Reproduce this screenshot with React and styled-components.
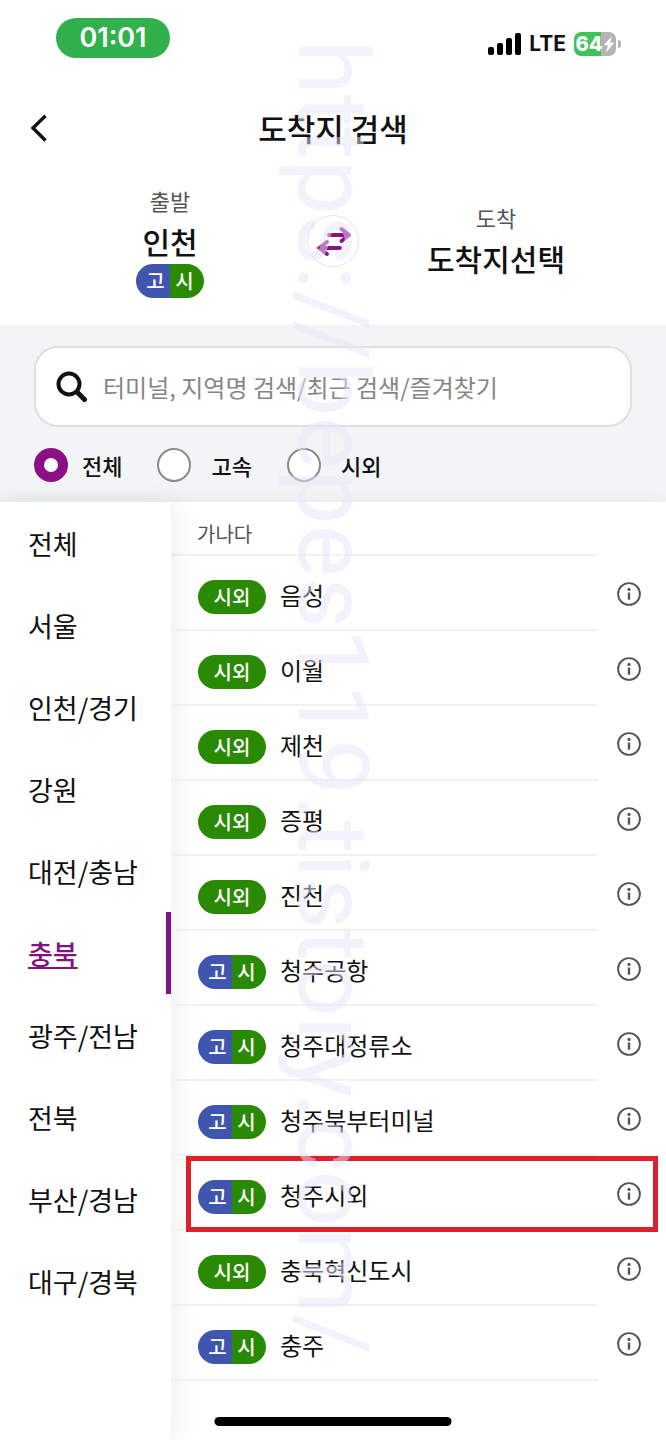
import React, { useState } from "react";
import styled, { createGlobalStyle } from "styled-components";

const regions = [
  "전체",
  "서울",
  "인천/경기",
  "강원",
  "대전/충남",
  "충북",
  "광주/전남",
  "전북",
  "부산/경남",
  "대구/경북",
];

const terminals = [
  { name: "음성" },
  { name: "이월" },
  { name: "제천" },
  { name: "증평" },
  { name: "진천" },
  { name: "청주공항", express: true },
  { name: "청주대정류소", express: true },
  { name: "청주북부터미널", express: true },
  { name: "청주시외", express: true, marked: true },
  { name: "충북혁신도시" },
  { name: "충주", express: true },
];

const busTypes = ["전체", "고속", "시외"];

const SignalIcon = () => (
  <svg width="33" height="22" viewBox="0 0 33 22" aria-hidden="true">
    <rect x="0" y="14" width="6" height="8" rx="2" />
    <rect x="9" y="10" width="6" height="12" rx="2" />
    <rect x="18" y="5" width="6" height="17" rx="2" />
    <rect x="27" y="0" width="6" height="22" rx="2" />
  </svg>
);

const BoltIcon = () => (
  <svg width="12" height="18" viewBox="0 0 12 18" aria-hidden="true">
    <path d="M9 1 0.500 10.200h4.500L3 17.500 11.500 7.600H7z" fill="#fff" />
  </svg>
);

const BackIcon = () => (
  <svg width="18" height="28" viewBox="0 0 18 28" aria-hidden="true">
    <path d="M14.500 1.800 2 14l12.500 12.500" fill="none" stroke="#111" strokeWidth="3.400" />
  </svg>
);

const SwapIcon = () => (
  <svg width="36" height="30" viewBox="0 0 36 30" aria-hidden="true">
    <g fill="none" stroke="#8b1085" strokeWidth="3.800" strokeLinecap="round">
      <path d="M14 9h19M26.500 3l7.500 6-7.500 6" />
      <path d="M25 22H5M12 16l-7.500 6 7.500 6" />
    </g>
  </svg>
);

const SearchIcon = () => (
  <svg width="32" height="32" viewBox="0 0 32 32" aria-hidden="true">
    <g fill="none" stroke="#111" strokeLinecap="round">
      <circle cx="13" cy="13" r="10.500" strokeWidth="4" />
      <path d="M21.500 21.500l7 7" strokeWidth="5" />
    </g>
  </svg>
);

const InfoIcon = () => (
  <svg width="24" height="24" viewBox="0 0 24 24" aria-hidden="true">
    <circle cx="12" cy="12" r="10.900" fill="none" stroke="#555" strokeWidth="1.900" />
    <circle cx="12" cy="7.400" r="1.600" fill="#555" />
    <path d="M12 10.500v7.200" stroke="#555" strokeWidth="2.400" />
  </svg>
);

const TypeBadge = ({ express }) =>
  express ? (
    <Badge $split>
      <BadgeText>고</BadgeText>
      <BadgeText>시</BadgeText>
    </Badge>
  ) : (
    <Badge>
      <BadgeText>시외</BadgeText>
    </Badge>
  );

const App = () => {
  const [region, setRegion] = useState("충북");
  const [busType, setBusType] = useState("전체");

  return (
    <Page>
      <GlobalStyle />
      <StatusBar>
        <Clock>01:01</Clock>
        <StatusIcons>
          <SignalIcon />
          <Network>LTE</Network>
          <Battery>
            <BatteryBody>
              64
              <BoltIcon />
            </BatteryBody>
            <BatteryTip />
          </Battery>
        </StatusIcons>
      </StatusBar>

      <Header>
        <BackButton type="button" aria-label="뒤로">
          <BackIcon />
        </BackButton>
        <Title>도착지 검색</Title>
      </Header>

      <Route>
        <Stop>
          <StopLabel>출발</StopLabel>
          <StopName>인천</StopName>
          <TypeBadge express />
        </Stop>
        <SwapButton type="button" aria-label="출발지와 도착지 바꾸기">
          <SwapIcon />
        </SwapButton>
        <Stop>
          <StopLabel>도착</StopLabel>
          <StopName>도착지선택</StopName>
        </Stop>
      </Route>

      <Filters>
        <SearchBox>
          <SearchIcon />
          <SearchInput
            type="text"
            aria-label="터미널 검색"
            placeholder="터미널, 지역명 검색/최근 검색/즐겨찾기"
          />
        </SearchBox>
        <RadioGroup>
          {busTypes.map((type) => (
            <RadioLabel key={type}>
              <Radio
                type="radio"
                name="busType"
                checked={busType === type}
                onChange={() => setBusType(type)}
              />
              {type}
            </RadioLabel>
          ))}
        </RadioGroup>
      </Filters>

      <Content>
        <Sidebar>
          {regions.map((name) => (
            <RegionButton
              key={name}
              type="button"
              $active={name === region}
              onClick={() => setRegion(name)}
            >
              {name}
            </RegionButton>
          ))}
        </Sidebar>
        <Results>
          <SortHeading>가나다</SortHeading>
          <List>
            {terminals.map(({ name, express, marked }) => (
              <Row key={name}>
                <RowMain href="#">
                  <TypeBadge express={express} />
                  {name}
                </RowMain>
                <InfoButton type="button" aria-label={`${name} 정보`}>
                  <InfoIcon />
                </InfoButton>
                {marked && <Marker />}
              </Row>
            ))}
          </List>
        </Results>
      </Content>

      <HomeIndicator />
      <Watermark>https://bepes119.tistory.com/</Watermark>
    </Page>
  );
};

const GlobalStyle = createGlobalStyle`
  * {
    box-sizing: border-box;
  }
  body {
    margin: 0;
    background: #fff;
    color: #111;
    font-family: "Noto Sans CJK KR", sans-serif;
  }
  button {
    border: 0;
    padding: 0;
    background: none;
    color: inherit;
    font-family: inherit;
    cursor: pointer;
  }
  svg {
    display: block;
    flex-shrink: 0;
  }
`;

const Page = styled.div`
  position: relative;
  display: flex;
  flex-direction: column;
  min-height: 100vh;
  overflow: hidden;
`;

const StatusBar = styled.div`
  display: flex;
  justify-content: space-between;
  align-items: flex-start;
  height: 88px;
  padding: 18px 45px 0 56px;
  font-family: Inter, sans-serif;
`;

const Clock = styled.div`
  width: 114px;
  border-radius: 20px;
  background: #31b14d;
  color: #fff;
  font-size: 27px;
  font-weight: 600;
  line-height: 40px;
  text-align: center;
`;

const StatusIcons = styled.div`
  display: flex;
  align-items: center;
  gap: 8px;
  padding-top: 14px;
`;

const Network = styled.span`
  font-size: 21px;
  font-weight: 700;
  line-height: 24px;
`;

const Battery = styled.div`
  display: flex;
  align-items: center;
  gap: 2px;
`;

const BatteryBody = styled.div`
  display: flex;
  align-items: center;
  justify-content: center;
  width: 42px;
  height: 24px;
  border-radius: 7px;
  background: linear-gradient(to right, #3fc45c 65%, #b4b4b4 65%);
  color: #fff;
  font-size: 20px;
  font-weight: 800;
  line-height: 24px;
`;

const BatteryTip = styled.div`
  width: 3px;
  height: 8px;
  border-radius: 0 3px 3px 0;
  background: #b4b4b4;
`;

const Header = styled.header`
  display: grid;
  grid-template-columns: 48px 1fr 48px;
  align-items: center;
  height: 80px;
  padding: 0 16px;
`;

const BackButton = styled.button`
  display: flex;
  align-items: center;
  justify-content: center;
  height: 48px;
`;

const Title = styled.h1`
  margin: 0;
  font-size: 31px;
  font-weight: 500;
  line-height: 44px;
  text-align: center;
`;

const Route = styled.section`
  display: grid;
  grid-template-columns: 1fr 52px 1fr;
  align-items: center;
  padding: 16px 33px 27px;
`;

const Stop = styled.div`
  display: flex;
  flex-direction: column;
  align-items: center;
`;

const StopLabel = styled.span`
  margin-bottom: 4px;
  color: #555;
  font-size: 22px;
  line-height: 32px;
`;

const StopName = styled.strong`
  margin-bottom: 2px;
  font-size: 30px;
  font-weight: 500;
  line-height: 42px;
`;

const SwapButton = styled.button`
  display: flex;
  align-items: center;
  justify-content: center;
  height: 52px;
  border: 1px solid #e4e4e4;
  border-radius: 50%;
`;

const Badge = styled.span`
  display: flex;
  flex-shrink: 0;
  width: 68px;
  height: 34px;
  padding: ${({ $split }) => ($split ? "0 5px" : "0")};
  border-radius: 17px;
  background: ${({ $split }) =>
    $split ? "linear-gradient(to right, #3f55ae 50%, #2a8a03 50%)" : "#2a8a03"};
`;

const BadgeText = styled.span`
  flex: 1;
  color: #fff;
  font-size: 20px;
  font-weight: 500;
  line-height: 34px;
  text-align: center;
`;

const Filters = styled.section`
  display: flex;
  flex-direction: column;
  gap: 21px;
  padding: 21px 34px 20px;
  background: #f3f4f6;
`;

const SearchBox = styled.div`
  display: flex;
  align-items: center;
  gap: 15px;
  height: 81px;
  padding: 0 20px;
  border: 2px solid #dfdfe1;
  border-radius: 24px;
  background: #fff;
`;

const SearchInput = styled.input`
  flex: 1;
  min-width: 0;
  padding: 0;
  border: 0;
  outline: 0;
  background: none;
  color: #111;
  font-family: inherit;
  font-size: 24px;
  line-height: 36px;
  &::placeholder {
    color: #868686;
    opacity: 1;
  }
`;

const RadioGroup = styled.div`
  display: flex;
  gap: 35px;
`;

const Radio = styled.input`
  appearance: none;
  width: 34px;
  height: 34px;
  margin: 0 20px 0 0;
  border: 2px solid #8a8a8a;
  border-radius: 50%;
  background: #fff;
  &:checked {
    margin-right: 14px;
    border: 10px solid #8b1085;
  }
`;

const RadioLabel = styled.label`
  display: flex;
  align-items: center;
  font-size: 22px;
  font-weight: 500;
  line-height: 32px;
`;

const Content = styled.main`
  position: relative;
  display: flex;
  flex: 1;
  background: #fff;
  box-shadow: 0 0 16px rgba(0, 0, 0, 0.06);
`;

const Sidebar = styled.nav`
  position: relative;
  display: flex;
  flex-direction: column;
  flex-shrink: 0;
  width: 171px;
  background: #fff;
  box-shadow: 4px 0 24px rgba(0, 0, 0, 0.07);
`;

const RegionButton = styled.button`
  height: 82px;
  padding: 1px 0 0 28px;
  border-right: 5px solid ${({ $active }) => ($active ? "#84127e" : "transparent")};
  color: ${({ $active }) => ($active ? "#84127e" : "#111")};
  font-size: 27px;
  font-weight: ${({ $active }) => ($active ? 500 : 400)};
  line-height: 40px;
  text-align: left;
  text-decoration: ${({ $active }) => ($active ? "underline" : "none")};
`;

const Results = styled.section`
  flex: 1;
  min-width: 0;
`;

const SortHeading = styled.h2`
  height: 54px;
  margin: 0 68px 0 0;
  padding: 17px 0 0 26px;
  border-bottom: 2px solid #f2f2f3;
  color: #555;
  font-size: 20px;
  font-weight: 400;
  line-height: 30px;
`;

const List = styled.ul`
  margin: 0;
  padding: 0;
  list-style: none;
`;

const Row = styled.li`
  position: relative;
  display: flex;
  height: 75px;
`;

const RowMain = styled.a`
  display: flex;
  flex: 1;
  align-items: center;
  gap: 14px;
  padding: 4px 0 0 27px;
  border-bottom: 2px solid #f2f2f3;
  color: #111;
  font-size: 24px;
  line-height: 36px;
  text-decoration: none;
  ${Badge} {
    margin-top: 4px;
  }
`;

const InfoButton = styled.button`
  display: flex;
  align-items: center;
  justify-content: center;
  width: 68px;
  padding-right: 6px;
`;

const Marker = styled.div`
  position: absolute;
  inset: 0 8px -1px 15px;
  border: 5px solid #dc202c;
  pointer-events: none;
`;

const HomeIndicator = styled.div`
  position: absolute;
  bottom: 14px;
  left: 50%;
  width: 237px;
  height: 9px;
  border-radius: 5px;
  background: #000;
  transform: translateX(-50%);
`;

const Watermark = styled.div`
  position: absolute;
  top: 40px;
  left: 50%;
  margin-left: -70px;
  color: rgba(231, 229, 250, 0.5);
  font-family: Roboto, sans-serif;
  font-size: 99px;
  line-height: 140px;
  white-space: nowrap;
  writing-mode: vertical-rl;
  pointer-events: none;
`;

export default App;
